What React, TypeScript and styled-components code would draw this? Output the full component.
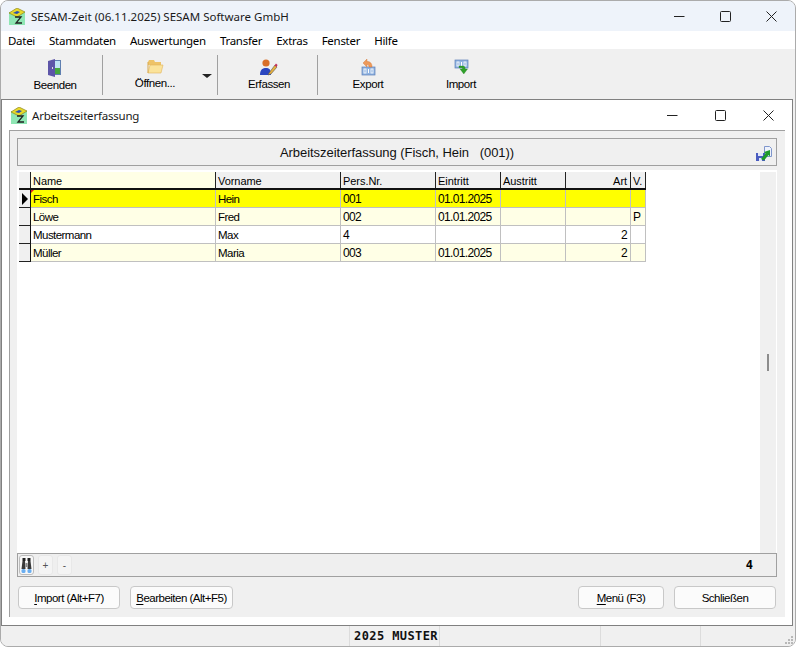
import React from 'react';
import styled, { createGlobalStyle } from 'styled-components';

const UI_FONT = '"Noto Sans", "Open Sans", sans-serif';
const GRID_FONT = '"Liberation Sans", Arial, sans-serif';
const COLUMNS = '12px 185px 125px 95px 65px 65px 65px 15px';

const GlobalStyle = createGlobalStyle`
  html, body {
    margin: 0;
    padding: 0;
    background: #fff;
  }
  * {
    box-sizing: border-box;
  }
`;

const Window = styled.div`
  display: flex;
  flex-direction: column;
  width: 796px;
  height: 647px;
  overflow: hidden;
  background: #f0f0f0;
  border: 1px solid #ababab;
  border-radius: 8px;
`;

const TitleBar = styled.div`
  display: flex;
  align-items: center;
  flex: none;
  height: 30px;
  padding-left: 8px;
  background: #eef3fa;
`;

const TitleText = styled.span`
  margin-left: 5px;
  font: 11.5px ${UI_FONT};
  color: #1a1a1a;
`;

const Controls = styled.div<{ $gap: number; $right: number }>`
  display: flex;
  align-items: center;
  gap: ${(p) => p.$gap}px;
  margin-left: auto;
  margin-right: ${(p) => p.$right}px;
`;

const MenuBar = styled.div`
  display: flex;
  align-items: center;
  flex: none;
  gap: 14px;
  height: 18px;
  padding-left: 7px;
  background: #fff;
`;

const MenuItem = styled.span`
  font: 11.5px ${UI_FONT};
  letter-spacing: -0.28px;
  color: #000;
`;

const Toolbar = styled.div`
  display: flex;
  flex: none;
  height: 50px;
  padding-left: 7px;
  background: #f0f0f0;
`;

const Tool = styled.div<{ $w: number; $pl?: number }>`
  display: flex;
  flex-direction: column;
  align-items: center;
  flex: none;
  width: ${(p) => p.$w}px;
  padding-left: ${(p) => p.$pl ?? 0}px;
  padding-top: 10px;
  font: 11.5px ${GRID_FONT};
  letter-spacing: -0.4px;
  color: #000;
`;

const ToolLabel = styled.span`
  line-height: 16px;
`;

const ToolSep = styled.div`
  flex: none;
  width: 1px;
  height: 40px;
  margin: 6px 0 0 0;
  background: #a0a0a0;
`;

const DropArrow = styled.div`
  flex: none;
  width: 0;
  height: 0;
  margin: 25px 5px 0 -5px;
  border-left: 5px solid transparent;
  border-right: 5px solid transparent;
  border-top: 4px solid #222;
`;

const ChildWindow = styled.div`
  display: flex;
  flex-direction: column;
  flex: none;
  width: 792px;
  height: 527px;
  background: #fff;
  border: 1px solid #808080;
`;

const ChildTitle = styled.div`
  display: flex;
  align-items: center;
  flex: none;
  height: 30px;
  padding-left: 9px;
`;

const ChildTitleText = styled.span`
  margin-left: 4px;
  font: 11.5px ${UI_FONT};
  letter-spacing: -0.2px;
  color: #1a1a1a;
`;

const Panel = styled.div`
  display: flex;
  flex-direction: column;
  flex: none;
  width: 776px;
  height: 487px;
  margin-left: 7px;
  padding: 7px 8px 8px 7px;
  background: #f0f0f0;
  border-top: 1px solid #a0a0a0;
  border-left: 1px solid #a0a0a0;
`;

const Strip = styled.div`
  display: flex;
  align-items: center;
  flex: none;
  position: relative;
  justify-content: center;
  height: 28px;
  background: #f0f0f0;
  border: 1px solid #a0a0a0;
  font: 13px ${GRID_FONT};
  letter-spacing: -0.05px;
  white-space: pre;
  color: #111;
`;

const StripIcon = styled.div`
  position: absolute;
  right: 4px;
  top: 7px;
  display: flex;
`;

const GridBox = styled.div`
  display: flex;
  flex: 1;
  min-height: 0;
  margin-top: 4px;
  padding-right: 1px;
  background: #fff;
`;

const TableArea = styled.div`
  flex: 1;
  padding: 2px 0 0 2px;
`;

const Row = styled.div<{ $bg?: string }>`
  display: grid;
  grid-template-columns: ${COLUMNS};
  width: 627px;
  height: 18px;
  background: ${(p) => p.$bg ?? '#fff'};
  font: 11px ${GRID_FONT};
  color: #000;
`;

const HeadRow = styled(Row)`
  border-bottom: 2px solid #111;
`;

const HeadCell = styled.div<{ $bg?: string; $right?: boolean }>`
  overflow: hidden;
  padding: 0 ${(p) => (p.$right ? 3 : 0)}px 0 2px;
  background: ${(p) => p.$bg ?? '#f0f0f0'};
  border-right: 1px solid #222;
  line-height: 18px;
  letter-spacing: -0.05px;
  text-align: ${(p) => (p.$right ? 'right' : 'left')};
`;

const Cell = styled.div<{ $right?: boolean; $tight?: boolean }>`
  overflow: hidden;
  padding: 0 ${(p) => (p.$right ? 3 : 0)}px 0 2px;
  border-right: 1px solid #c0c0c0;
  border-bottom: 1px solid #c0c0c0;
  line-height: 19px;
  font-size: ${(p) => (p.$tight ? 11.5 : 12)}px;
  letter-spacing: ${(p) => (p.$tight ? -0.55 : -0.65)}px;
  text-align: ${(p) => (p.$right ? 'right' : 'left')};
  position: relative;
`;

const Indicator = styled.div`
  display: flex;
  align-items: center;
  padding-left: 3px;
  background: #f0f0f0;
  border-right: 1px solid #111;
  border-bottom: 1px solid #222;
`;

const CornerMark = styled.div`
  position: absolute;
  left: 0;
  top: 0;
  width: 0;
  height: 0;
  border-top: 3px solid #e02020;
  border-right: 3px solid transparent;
`;

const RowArrow = styled.div`
  width: 0;
  height: 0;
  border-top: 6px solid transparent;
  border-bottom: 6px solid transparent;
  border-left: 6px solid #000;
`;

const ScrollTrack = styled.div`
  display: flex;
  justify-content: center;
  flex: none;
  width: 16px;
  margin-top: 2px;
  padding-top: 182px;
  background: #f0f0f0;
`;

const ScrollThumb = styled.div`
  width: 2px;
  height: 17px;
  background: #8c8c8c;
`;

const Footer = styled.div`
  display: flex;
  align-items: center;
  flex: none;
  height: 24px;
  padding: 0 23px 0 1px;
  background: #efefef;
  border: 1px solid #a0a0a0;
`;

const NavButton = styled.div<{ $active?: boolean }>`
  display: flex;
  align-items: center;
  justify-content: center;
  flex: none;
  width: 15px;
  height: 20px;
  margin-right: 4px;
  background: ${(p) => (p.$active ? '#f8f8f8' : '#f4f4f4')};
  border: 1px solid ${(p) => (p.$active ? '#bcbcbc' : '#e8e8e8')};
  border-radius: 3px;
  font: 10px ${GRID_FONT};
  color: #555;
`;

const Count = styled.span`
  margin-left: auto;
  font: bold 12px "DejaVu Sans Mono", monospace;
  color: #000;
`;

const ButtonRow = styled.div`
  display: flex;
  flex: none;
  gap: 10px;
  margin-top: 9px;
  padding: 0 1px;
`;

const Button = styled.div<{ $w: number; $push?: boolean }>`
  display: flex;
  align-items: center;
  justify-content: center;
  flex: none;
  width: ${(p) => p.$w}px;
  height: 23px;
  margin-left: ${(p) => (p.$push ? 'auto' : '0')};
  background: #fbfbfb;
  border: 1px solid #c8c8c8;
  border-radius: 4px;
  font: 11.5px ${GRID_FONT};
  letter-spacing: -0.5px;
  white-space: pre;
  color: #000;

  u {
    text-underline-offset: 2px;
  }
`;

const StatusBar = styled.div`
  display: grid;
  grid-template-columns: 349px 90px 161px 100px 1fr;
  flex: 1;
  background: #f0f0f0;
`;

const StatusCell = styled.div<{ $last?: boolean }>`
  display: flex;
  justify-content: ${(p) => (p.$last ? 'flex-end' : 'center')};
  align-items: ${(p) => (p.$last ? 'flex-end' : 'center')};
  padding: ${(p) => (p.$last ? '0 1px 1px 0' : '0 0 0 3px')};
  border-right: ${(p) => (p.$last ? 'none' : '1px solid #dcdcdc')};
  font: bold 12px "DejaVu Sans Mono", monospace;
  letter-spacing: 0.4px;
  color: #111;
`;

const LogoIcon = () => (
  <svg width="17" height="17" viewBox="0 0 17 17">
    <rect x="0" y="4" width="16" height="13" fill="#8fe6b4" />
    <path d="M0 5 L8 0 L16 4 L8 9 Z" fill="#e8d92a" stroke="#8a8420" strokeWidth="0.7" />
    <path d="M4 5 L8 3 L11 4 L8 6 Z" fill="#2b4fb0" />
    <path d="M6 9 H12 L7 15 H13" fill="none" stroke="#222" strokeWidth="1.3" />
  </svg>
);

const DoorIcon = () => (
  <svg width="14" height="18" viewBox="0 0 14 18">
    <rect x="5" y="1" width="8" height="15" fill="#5f7fb0" />
    <rect x="7" y="2" width="5" height="7" fill="#bfe3f5" />
    <rect x="7" y="9" width="5" height="6" fill="#46a83e" />
    <path d="M0 2 L7 0 V18 L0 16 Z" fill="#5d55a8" />
    <rect x="4" y="8" width="1" height="2" fill="#ddd" />
  </svg>
);

const FolderIcon = () => (
  <svg width="17" height="16" viewBox="0 0 17 16">
    <path d="M1 3 L2 1 H7 L8 3 H14 V6 H1 Z" fill="#eec368" />
    <path d="M1 14 L3 6 H16 L14 14 Z" fill="#fbe39a" stroke="#e0b45c" strokeWidth="0.6" />
    <path d="M1 3 V14" stroke="#d9a94c" strokeWidth="1" />
  </svg>
);

const PersonIcon = () => (
  <svg width="18" height="17" viewBox="0 0 18 17">
    <circle cx="6" cy="4" r="3.6" fill="#d9702a" />
    <path d="M0 16 C0 10 3 9 6 9 C9 9 11 10 11 16 Z" fill="#2b47c0" />
    <path d="M9 14 L15 6 L17 8 L11 15 L8 16 Z" fill="#e8b13c" stroke="#555" strokeWidth="0.6" />
    <path d="M14.5 6.5 L16 4.5 L17.6 6 L16.4 8 Z" fill="#c2305a" />
  </svg>
);

const BinaryBox = ({ y }: { y: number }) => (
  <g>
    <rect x="1" y={y} width="13" height="8" fill="#8fb2e0" stroke="#5d7fb8" strokeWidth="0.7" />
    <rect x="3" y={y + 2} width="2" height="4" fill="none" stroke="#fff" strokeWidth="0.8" />
    <rect x="7" y={y + 2} width="1" height="4" fill="#fff" />
    <rect x="10" y={y + 2} width="2" height="4" fill="none" stroke="#fff" strokeWidth="0.8" />
  </g>
);

const ExportIcon = () => (
  <svg width="15" height="17" viewBox="0 0 15 17">
    <BinaryBox y={8} />
    <path d="M2 4 L6 0 V2.5 C9 2.5 11 4 11 8 H8 C8 6 7 5.5 6 5.5 V8 Z" fill="#ee9a5a" stroke="#cf7030" strokeWidth="0.4" />
  </svg>
);

const ImportIcon = () => (
  <svg width="15" height="17" viewBox="0 0 15 17">
    <BinaryBox y={1} />
    <path d="M5 7 H9 C10.5 7 11.2 8 11.2 10 H13.5 L9.8 15 L6 10 H8.5 C8.5 9 8 8.8 7 8.8 H5 Z" fill="#2fa02a" stroke="#1c7a1c" strokeWidth="0.3" />
  </svg>
);

const SaveArrowIcon = () => (
  <svg width="16" height="16" viewBox="0 0 16 16">
    <path d="M8.5 0.5 H13.5 L15.5 2.5 V10.5 H8.5 Z" fill="#eef2fb" stroke="#7f96cc" strokeWidth="1" />
    <rect x="0" y="7" width="9" height="8" fill="#4a5cc0" />
    <rect x="2" y="7" width="5" height="3" fill="#dfe6f7" />
    <rect x="3" y="12" width="3" height="3" fill="#dfe6f7" />
    <path d="M5 13 L9.5 7.5 L8 6 L14 4 L14 10.5 L12.5 9 L8 14.5 Z" fill="#1f9a2a" />
  </svg>
);

const BinocularsIcon = () => (
  <svg width="11" height="17" viewBox="0 0 11 17">
    <rect x="1.5" y="1" width="3" height="3" fill="#222" />
    <rect x="6.5" y="1" width="3" height="3" fill="#222" />
    <path d="M1.5 4 H4 L4.5 12 H0.5 Z" fill="#3a3a3a" />
    <path d="M7 4 H9.5 L10.5 12 H6.5 Z" fill="#3a3a3a" />
    <rect x="4.5" y="6" width="2" height="4" fill="#8a8a8a" />
    <rect x="0.5" y="12" width="4" height="4" rx="1.5" fill="#6aaef0" />
    <rect x="6.5" y="12" width="4" height="4" rx="1.5" fill="#6aaef0" />
  </svg>
);

const MinIcon = () => (
  <svg width="11" height="11" viewBox="0 0 11 11">
    <path d="M0 5.5 H10.5" stroke="#222" strokeWidth="1" />
  </svg>
);

const MaxIcon = () => (
  <svg width="11" height="11" viewBox="0 0 11 11">
    <rect x="0.5" y="0.5" width="10" height="10" rx="1" fill="none" stroke="#222" strokeWidth="1" />
  </svg>
);

const CloseIcon = () => (
  <svg width="11" height="11" viewBox="0 0 11 11">
    <path d="M0.5 0.5 L10.5 10.5 M10.5 0.5 L0.5 10.5" stroke="#222" strokeWidth="1" />
  </svg>
);

const GripIcon = () => (
  <svg width="10" height="10" viewBox="0 0 10 10" fill="#b8b8b8">
    <rect x="7" y="1" width="2" height="2" />
    <rect x="4" y="4" width="2" height="2" />
    <rect x="7" y="4" width="2" height="2" />
    <rect x="1" y="7" width="2" height="2" />
    <rect x="4" y="7" width="2" height="2" />
    <rect x="7" y="7" width="2" height="2" />
  </svg>
);

const menus = ['Datei', 'Stammdaten', 'Auswertungen', 'Transfer', 'Extras', 'Fenster', 'Hilfe'];

const YELLOW = '#ffff00';
const CREAM = '#ffffe6';

const rows = [
  { bg: YELLOW, current: true, cells: ['Fisch', 'Hein', '001', '01.01.2025', '', '', ''] },
  { bg: CREAM, cells: ['Löwe', 'Fred', '002', '01.01.2025', '', '', 'P'] },
  { bg: '#ffffff', cells: ['Mustermann', 'Max', '4', '', '', '2', ''] },
  { bg: CREAM, cells: ['Müller', 'Maria', '003', '01.01.2025', '', '2', ''] },
];

const App: React.FC = () => {
  return (
    <>
      <GlobalStyle />
      <Window>
        <TitleBar>
          <LogoIcon />
          <TitleText>SESAM-Zeit (06.11.2025) SESAM Software GmbH</TitleText>
          <Controls $gap={35} $right={18}>
            <MinIcon />
            <MaxIcon />
            <CloseIcon />
          </Controls>
        </TitleBar>

        <MenuBar>
          {menus.map((m) => (
            <MenuItem key={m}>{m}</MenuItem>
          ))}
        </MenuBar>

        <Toolbar>
          <Tool $w={94}>
            <DoorIcon />
            <ToolLabel>Beenden</ToolLabel>
          </Tool>
          <ToolSep />
          <Tool $w={104}>
            <FolderIcon />
            <ToolLabel>Öffnen...</ToolLabel>
          </Tool>
          <DropArrow />
          <ToolSep />
          <Tool $w={99} $pl={3}>
            <PersonIcon />
            <ToolLabel>Erfassen</ToolLabel>
          </Tool>
          <ToolSep />
          <Tool $w={100}>
            <ExportIcon />
            <ToolLabel>Export</ToolLabel>
          </Tool>
          <Tool $w={86}>
            <ImportIcon />
            <ToolLabel>Import</ToolLabel>
          </Tool>
        </Toolbar>

        <ChildWindow>
          <ChildTitle>
            <LogoIcon />
            <ChildTitleText>Arbeitszeiterfassung</ChildTitleText>
            <Controls $gap={37} $right={18}>
              <MinIcon />
              <MaxIcon />
              <CloseIcon />
            </Controls>
          </ChildTitle>

          <Panel>
            <Strip>
              Arbeitszeiterfassung (Fisch, Hein   (001))
              <StripIcon>
                <SaveArrowIcon />
              </StripIcon>
            </Strip>

            <GridBox>
              <TableArea>
                <HeadRow>
                  <HeadCell />
                  <HeadCell $bg={CREAM}>Name</HeadCell>
                  <HeadCell>Vorname</HeadCell>
                  <HeadCell>Pers.Nr.</HeadCell>
                  <HeadCell>Eintritt</HeadCell>
                  <HeadCell>Austritt</HeadCell>
                  <HeadCell $right>Art</HeadCell>
                  <HeadCell>V.</HeadCell>
                </HeadRow>
                {rows.map((r) => (
                  <Row key={r.cells[0]} $bg={r.bg}>
                    <Indicator>{r.current && <RowArrow />}</Indicator>
                    {r.cells.map((c, i) => (
                      <Cell key={i} $right={i === 5} $tight={i < 2}>
                        {r.current && i === 0 && <CornerMark />}
                        {c}
                      </Cell>
                    ))}
                  </Row>
                ))}
              </TableArea>
              <ScrollTrack>
                <ScrollThumb />
              </ScrollTrack>
            </GridBox>

            <Footer>
              <NavButton $active>
                <BinocularsIcon />
              </NavButton>
              <NavButton>+</NavButton>
              <NavButton>-</NavButton>
              <Count>4</Count>
            </Footer>

            <ButtonRow>
              <Button $w={102}>
                <u>I</u>mport (Alt+F7)
              </Button>
              <Button $w={103}>
                <u>B</u>earbeiten (Alt+F5)
              </Button>
              <Button $w={86} $push>
                <u>M</u>enü (F3)
              </Button>
              <Button $w={102}>Schließen</Button>
            </ButtonRow>
          </Panel>
        </ChildWindow>

        <StatusBar>
          <StatusCell />
          <StatusCell>2025 MUSTER</StatusCell>
          <StatusCell />
          <StatusCell />
          <StatusCell $last>
            <GripIcon />
          </StatusCell>
        </StatusBar>
      </Window>
    </>
  );
};

export default App;
